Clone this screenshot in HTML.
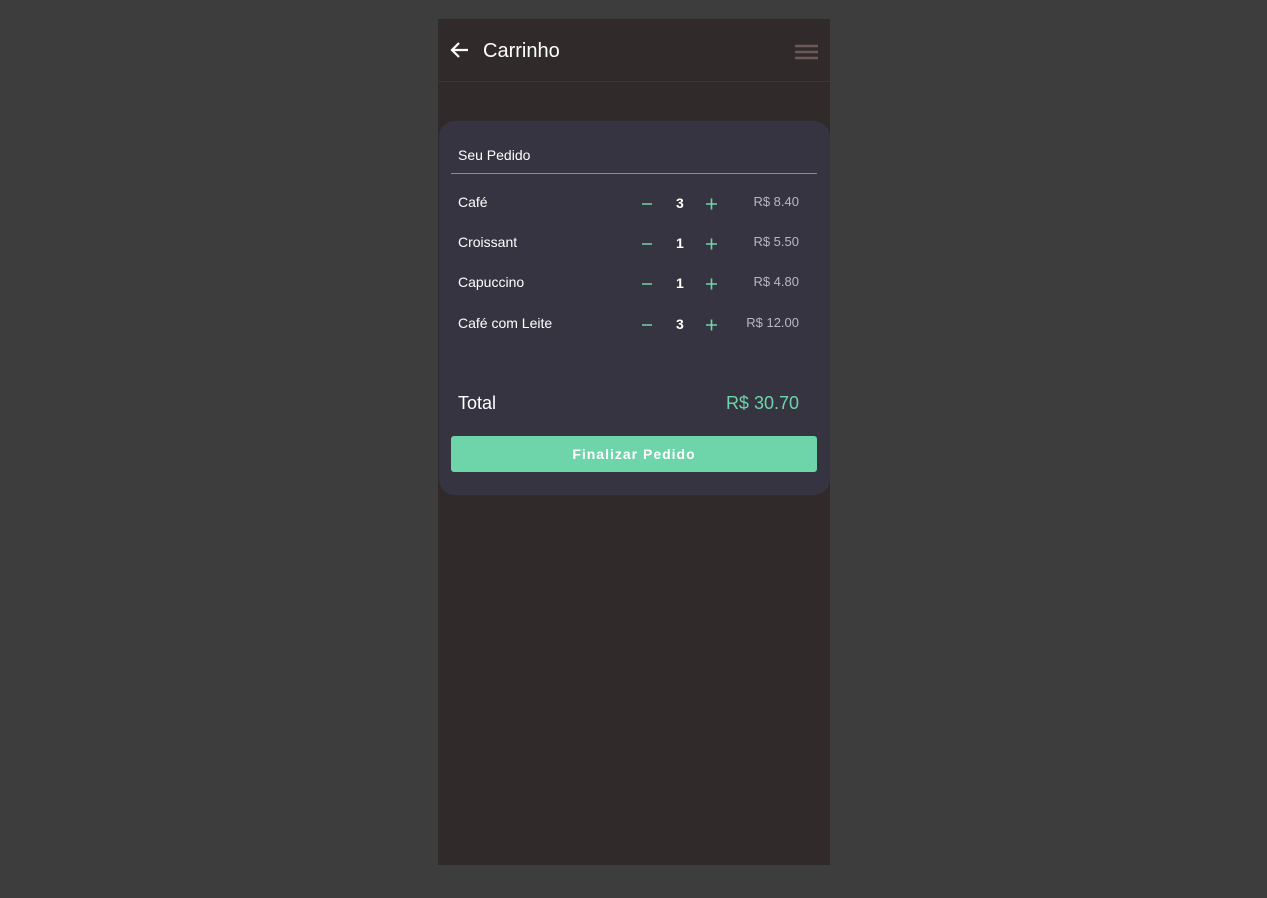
<!DOCTYPE html><html><head><style>
body{margin:0;background:#3d3d3d;width:1267px;height:898px;position:relative;font-family:"Liberation Sans",sans-serif;overflow:hidden}
.ph{position:absolute;left:438px;top:19px;width:392px;height:846px;background:#302b2a}
.hd{position:absolute;left:0;top:0;width:392px;height:62px;border-bottom:1px solid #3f3534}
.t{position:absolute;left:45px;top:21px;color:#fff;font-size:20px}
.card{position:absolute;left:1px;top:102px;width:391px;height:374px;background:#353440;border-radius:16px}
.sp{position:absolute;left:19px;top:26px;color:#fff;font-size:14px}
.ln{position:absolute;left:12px;top:52px;width:366px;height:1px;background:#8a8a92}
.row{position:absolute;left:0;width:391px;height:20px;font-size:14px;color:#fff}
.row .n{position:absolute;left:19px;top:0}
.row svg{position:absolute;left:200px;top:0}
.row .q{position:absolute;left:237px;top:1px;font-weight:bold}
.row .p{position:absolute;left:268px;top:0;width:92px;text-align:right;color:#b8b8c0;font-size:13px}
.tot{position:absolute;left:19px;top:272px;color:#fff;font-size:18px}
.tv{position:absolute;right:31px;top:272px;color:#6ed4a9;font-size:18px}
.btn{position:absolute;left:12px;top:315px;width:366px;height:36px;background:#6ed4a9;border-radius:3px;color:#fff;font-weight:bold;font-size:14px;letter-spacing:1px;text-align:center;line-height:36px}
</style></head><body><div class="ph">
<div class="hd"><svg style="position:absolute;left:11px;top:22px" width="20" height="18" viewBox="0 0 20 18"><path d="M19 9H3M10 2L3 9l7 7" stroke="#fff" stroke-width="2.2" fill="none"/></svg>
<div class="t">Carrinho</div>
<svg style="position:absolute;left:357px;top:25px" width="23" height="16"><path d="M0 2h23M0 8h23M0 14h23" stroke="#6b5a58" stroke-width="2.5"/></svg></div>
<div class="card"><div class="sp">Seu Pedido</div><div class="ln"></div>
<div class="row" style="top:73px"><span class="n">Café</span><svg width="90" height="20"><path d="M3 10h10M67 10h11M72.5 4.5v11" stroke="#6ed4a9" stroke-width="1.6"/></svg><span class="q">3</span><span class="p">R$ 8.40</span></div>
<div class="row" style="top:113px"><span class="n">Croissant</span><svg width="90" height="20"><path d="M3 10h10M67 10h11M72.5 4.5v11" stroke="#6ed4a9" stroke-width="1.6"/></svg><span class="q">1</span><span class="p">R$ 5.50</span></div>
<div class="row" style="top:153px"><span class="n">Capuccino</span><svg width="90" height="20"><path d="M3 10h10M67 10h11M72.5 4.5v11" stroke="#6ed4a9" stroke-width="1.6"/></svg><span class="q">1</span><span class="p">R$ 4.80</span></div>
<div class="row" style="top:194px"><span class="n">Café com Leite</span><svg width="90" height="20"><path d="M3 10h10M67 10h11M72.5 4.5v11" stroke="#6ed4a9" stroke-width="1.6"/></svg><span class="q">3</span><span class="p">R$ 12.00</span></div>
<div class="tot">Total</div><div class="tv">R$ 30.70</div>
<div class="btn">Finalizar Pedido</div></div>
</div></body></html>
